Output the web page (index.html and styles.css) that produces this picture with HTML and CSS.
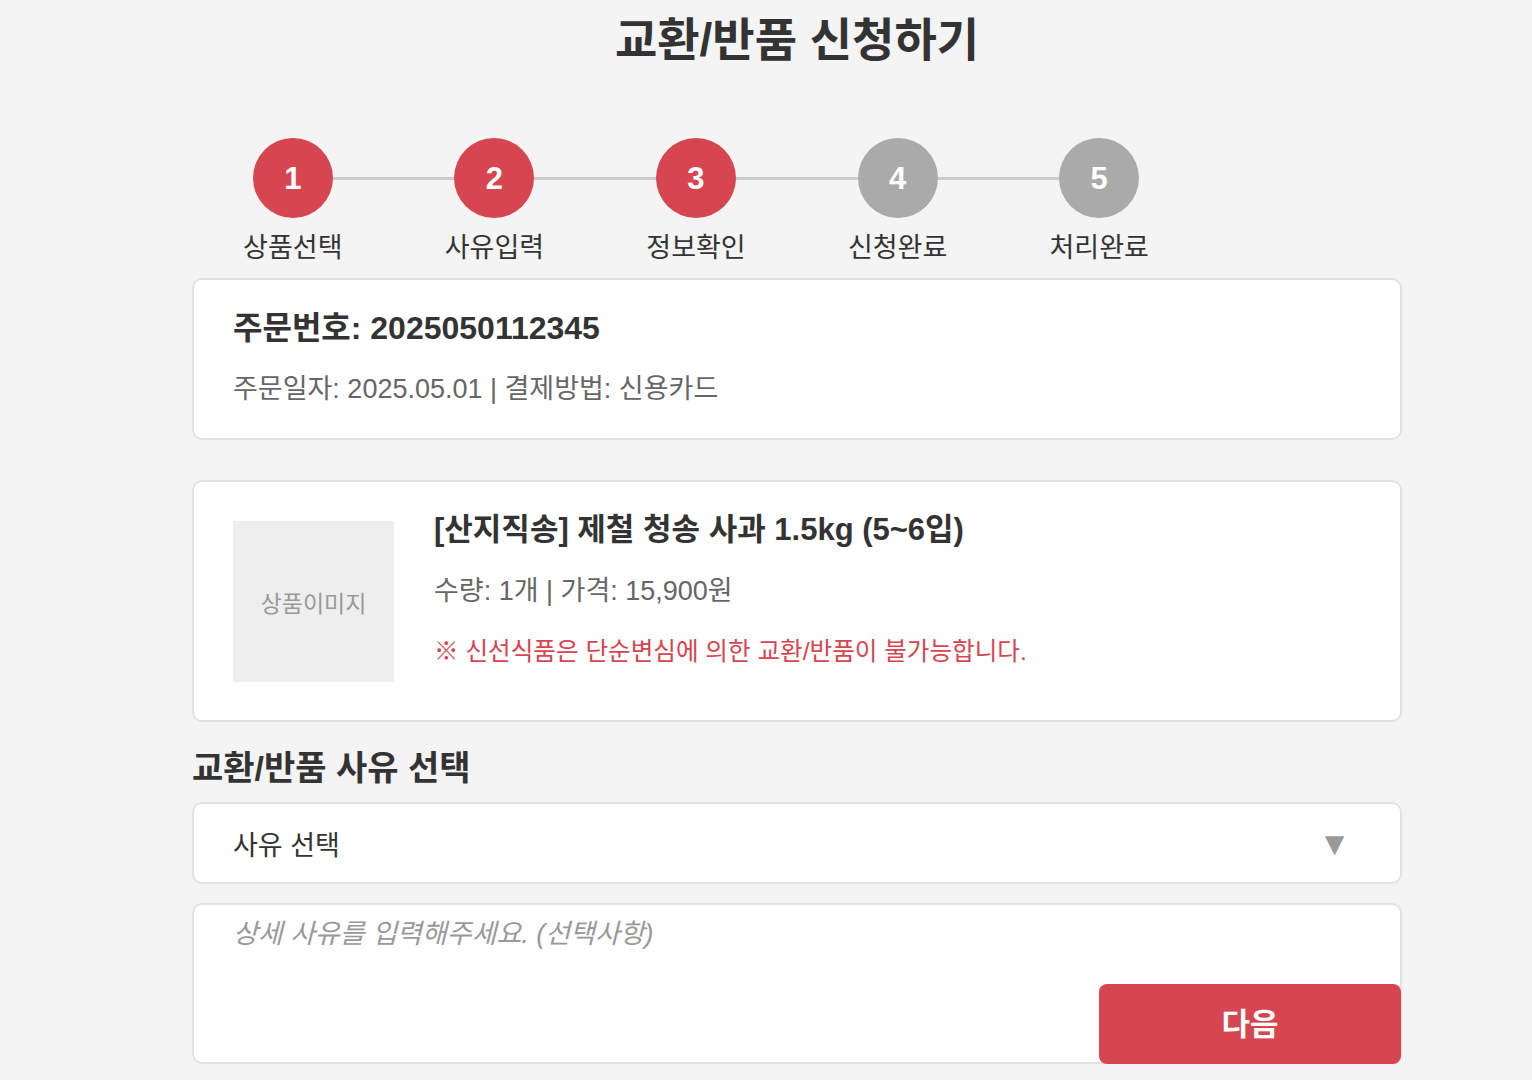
FILE: index.html
```html
<!DOCTYPE html>
<html lang="ko">
<head>
    <meta charset="UTF-8">
    <meta name="viewport" content="width=device-width, initial-scale=1.0">
    <title>교환/반품 신청하기</title>
    <link rel="stylesheet" href="styles.css">
</head>
<body>
    <div class="page">
        <h1 class="page-title">교환/반품 신청하기</h1>

        <ol class="steps">
            <li class="step done"><span class="step-num">1</span><span class="step-label">상품선택</span></li>
            <li class="step done"><span class="step-num">2</span><span class="step-label">사유입력</span></li>
            <li class="step done"><span class="step-num">3</span><span class="step-label">정보확인</span></li>
            <li class="step"><span class="step-num">4</span><span class="step-label">신청완료</span></li>
            <li class="step"><span class="step-num">5</span><span class="step-label">처리완료</span></li>
        </ol>

        <div class="card order-card">
            <p class="order-no">주문번호: 2025050112345</p>
            <p class="order-meta">주문일자: 2025.05.01 | 결제방법: 신용카드</p>
        </div>

        <div class="card product-card">
            <div class="product-thumb">상품이미지</div>
            <div class="product-info">
                <p class="product-name">[산지직송] 제철 청송 사과 1.5kg (5~6입)</p>
                <p class="product-meta">수량: 1개 | 가격: 15,900원</p>
                <p class="product-notice">※ 신선식품은 단순변심에 의한 교환/반품이 불가능합니다.</p>
            </div>
        </div>

        <h2 class="section-title">교환/반품 사유 선택</h2>
        <div class="reason-select">
            <span>사유 선택</span>
            <span class="arrow">▼</span>
        </div>
        <div class="reason-detail">
            <textarea placeholder="상세 사유를 입력해주세요. (선택사항)"></textarea>
            <button class="next-btn">다음</button>
        </div>
    </div>
</body>
</html>
```

FILE: styles.css
```css
body {
    margin: 0;
    background-color: #f4f4f4;
    color: #333333;
    font-family: "Liberation Sans", Arial, "Noto Sans CJK KR", sans-serif;
}
p {
    margin: 0;
}
.page {
    width: 1210px;
    margin-left: 192px;
    padding-top: 14px;
}
.page-title {
    margin: 0;
    font-size: 46px;
    line-height: 52px;
    font-weight: bold;
    text-align: center;
}

/* steps */
.steps {
    display: flex;
    width: 1008px;
    margin: 72px 0 0;
    padding: 0;
    list-style: none;
}
.step {
    position: relative;
    flex: 1;
    display: flex;
    flex-direction: column;
    align-items: center;
}
.step:not(:first-child)::before {
    content: "";
    position: absolute;
    top: 39px;
    left: -50%;
    width: 100%;
    height: 3px;
    background: #cccccc;
}
.step-num {
    position: relative;
    z-index: 1;
    width: 80px;
    height: 80px;
    border-radius: 50%;
    background: #aaaaaa;
    color: #ffffff;
    font-size: 31px;
    font-weight: bold;
    display: flex;
    align-items: center;
    justify-content: center;
    padding-top: 2px;
    box-sizing: border-box;
}
.step.done .step-num {
    background: #d64550;
}
.step-label {
    margin-top: 15px;
    font-size: 27px;
    line-height: 30px;
}

/* cards */
.card {
    background: #ffffff;
    border: 2px solid #e2e2e2;
    border-radius: 10px;
}
.order-card {
    margin-top: 15px;
    padding: 28px 39px 31px;
}
.order-no {
    font-size: 32px;
    line-height: 40px;
    font-weight: bold;
}
.order-meta {
    margin-top: 23px;
    font-size: 27px;
    line-height: 36px;
    color: #666666;
}
.product-card {
    margin-top: 40px;
    padding: 30px 39px 38px;
    display: flex;
    gap: 40px;
}
.product-thumb {
    width: 161px;
    height: 161px;
    margin-top: 9px;
    background: #eeeeee;
    color: #999999;
    font-size: 23px;
    display: flex;
    align-items: center;
    justify-content: center;
}
.product-name {
    font-size: 31px;
    line-height: 36px;
    font-weight: bold;
}
.product-meta {
    margin-top: 26px;
    font-size: 27px;
    line-height: 34px;
    color: #666666;
}
.product-notice {
    margin-top: 29px;
    font-size: 24.6px;
    line-height: 30px;
    color: #d64550;
}

/* reason */
.section-title {
    margin: 26px 0 14px;
    font-size: 34px;
    line-height: 40px;
}
.reason-select {
    height: 78px;
    padding: 0 49px 0 39px;
    background: #ffffff;
    border: 2px solid #e2e2e2;
    border-radius: 10px;
    display: flex;
    align-items: center;
    justify-content: space-between;
    font-size: 27px;
}
.reason-select .arrow {
    color: #999999;
    font-size: 33px;
    line-height: 1;
}
.reason-detail {
    position: relative;
    margin-top: 19px;
}
.reason-detail textarea {
    display: block;
    box-sizing: border-box;
    width: 100%;
    height: 161px;
    padding: 12px 39px;
    background: #ffffff;
    border: 2px solid #e2e2e2;
    border-radius: 10px;
    font-family: inherit;
    font-size: 27px;
    line-height: 34px;
    color: #333333;
    resize: none;
}
.reason-detail textarea::placeholder {
    color: #999999;
    font-style: italic;
}
.next-btn {
    position: absolute;
    right: 1px;
    bottom: 0;
    width: 302px;
    height: 80px;
    padding-bottom: 6px;
    border: none;
    border-radius: 8px;
    background: #d64550;
    color: #ffffff;
    font-family: inherit;
    font-size: 31px;
    font-weight: bold;
    cursor: pointer;
}
```
